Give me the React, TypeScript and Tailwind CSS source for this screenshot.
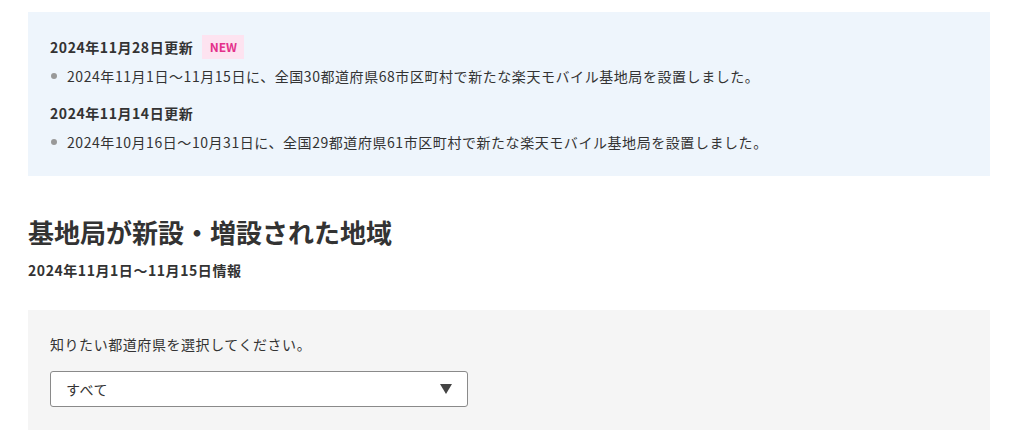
const font = { fontFamily: '"Noto Sans CJK JP", "Noto Sans", sans-serif' };

function Update({ date, text, isNew }: { date: string; text: string; isNew?: boolean }) {
  return (
    <div>
      <div className="flex items-center h-6">
        <span className="text-[14px] font-bold text-[#333] tracking-[0.04em]">{date}</span>
        {isNew && (
          <span className="ml-[9px] inline-flex items-center justify-center h-6 w-[42px] bg-[#fde3f0] text-[#e4318b] text-[12px] font-bold">
            NEW
          </span>
        )}
      </div>
      <ul className="mt-[5px]">
        <li className="flex items-center text-[14px] text-[#333] leading-6 tracking-[0.04em]">
          <span className="w-[6px] h-[6px] rounded-full bg-[#999] mr-[10px] ml-[1px]" />
          {text}
        </li>
      </ul>
    </div>
  );
}

export default function App() {
  return (
    <div className="bg-white w-[1024px] h-[443px] overflow-hidden" style={font}>
      <div className="ml-[28px] w-[962px] pt-[12px]">
        <section className="bg-[#eef5fc] px-[22px] pt-[23px] pb-[22px] flex flex-col gap-[13px]">
          <Update
            date="2024年11月28日更新"
            isNew
            text="2024年11月1日～11月15日に、全国30都道府県68市区町村で新たな楽天モバイル基地局を設置しました。"
          />
          <Update
            date="2024年11月14日更新"
            text="2024年10月16日～10月31日に、全国29都道府県61市区町村で新たな楽天モバイル基地局を設置しました。"
          />
        </section>

        <h2 className="mt-[38px] text-[26px] font-bold text-[#333] leading-[36px]">基地局が新設・増設された地域</h2>
        <p className="mt-[10px] text-[14px] font-bold text-[#333] leading-5 tracking-[0.04em]">2024年11月1日～11月15日情報</p>

        <section className="mt-[30px] bg-[#f5f5f5] px-[22px] pt-[24px] pb-[23px]">
          <p className="text-[14px] text-[#333] leading-5 tracking-[0.04em]">知りたい都道府県を選択してください。</p>
          <div className="mt-[17px] w-[418px] h-[36px] bg-white border border-[#8a8a8a] rounded-[3px] flex items-center justify-between pl-[15px] pr-[15px]">
            <span className="text-[14px] text-[#333] tracking-[0.04em]">すべて</span>
            <svg width="12" height="10" viewBox="0 0 12 10" className="fill-[#444]">
              <path d="M0 0 H12 L6 10 Z" />
            </svg>
          </div>
        </section>
      </div>
    </div>
  );
}
